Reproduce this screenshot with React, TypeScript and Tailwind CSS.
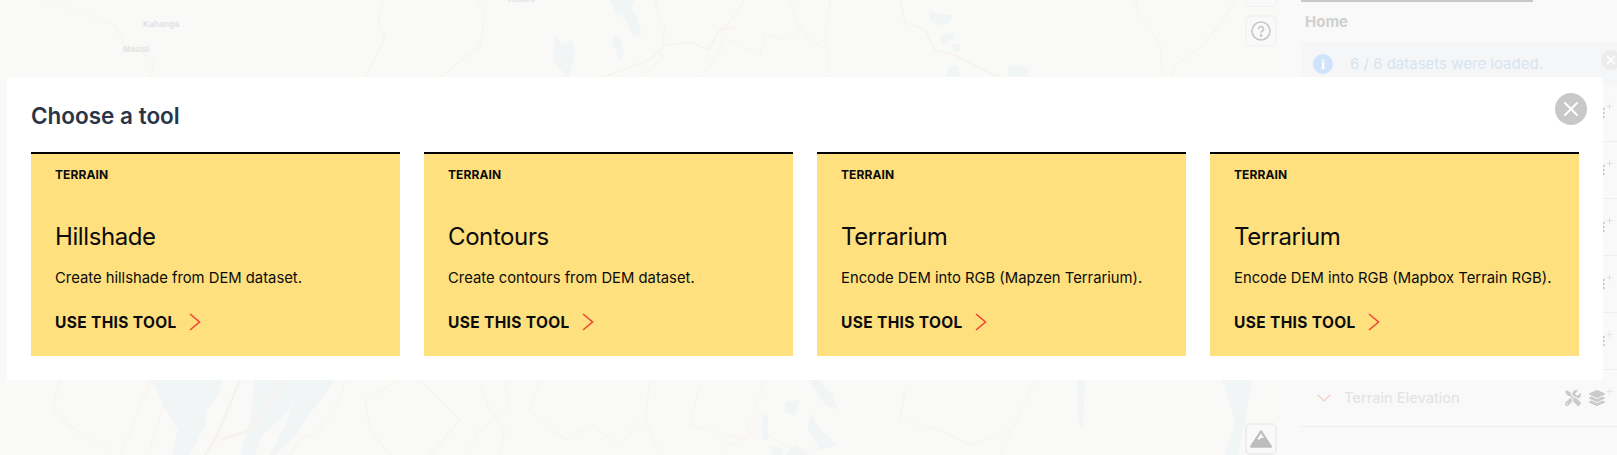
import React from "react";
import { Plus, X } from "lucide-react";
import { FaLayerGroup, FaMountain, FaTools } from "react-icons/fa";

const tools = [
  { title: "Hillshade", text: "Create hillshade from DEM dataset." },
  { title: "Contours", text: "Create contours from DEM dataset." },
  { title: "Terrarium", text: "Encode DEM into RGB (Mapzen Terrarium)." },
  { title: "Terrarium", text: "Encode DEM into RGB (Mapbox Terrain RGB)." },
];

function ToolCard({ title, text }: { title: string; text: string }) {
  return (
    <div className="flex h-[204px] w-[369px] flex-col border-t-2 border-black bg-[#fee07f] pl-6 text-[#0c0c0c]">
      <div className="mt-[13px] h-[16px] text-[12px] font-bold leading-[16px] tracking-[0.1px]">TERRAIN</div>
      <div className="mt-[38px] h-[32px] text-[24px] leading-[32px] tracking-[-0.4px]">{title}</div>
      <div className="mt-[15px] h-[20px] text-[14.8px] leading-[20px]">{text}</div>
      <div className="mt-[25px] flex h-[20px] items-center text-[15.5px] font-bold leading-[20px] tracking-[0.35px]">
        USE THIS TOOL
        <svg className="ml-[12px] -translate-y-px" width="12" height="18" viewBox="0 0 12 18" fill="none" stroke="#f04438" strokeWidth="1.6">
          <path d="M1 1 L10.5 9 L1 17" />
        </svg>
      </div>
    </div>
  );
}

function MapLayer() {
  return (
    <svg className="h-full w-full" viewBox="0 0 1285 455" fill="none">
      <rect width="1285" height="455" fill="#f9f9f7" />
      <g stroke="#faf4eb" strokeWidth="1.2" strokeLinejoin="round">
        <path d="M45 0 L90 15 L115 25 L125 45 L155 60 L150 78" />
        <path d="M383 0 L378 20 L385 38 L365 78" />
        <path d="M478 0 L485 15 L480 45 L440 78" />
        <path d="M655 0 L660 20 L665 28 L660 60 L640 78" />
        <path d="M700 78 L722 48 L722 30 L735 15 L745 0" />
        <path d="M725 38 L760 55 L765 35 L785 40 L800 28 L790 0" />
        <path d="M800 28 L815 45 L825 40 L830 0" />
        <path d="M826 40 L830 78" />
        <path d="M1135 0 L1140 18 L1150 28 L1160 45 L1163 78" />
        <path d="M1235 0 L1220 25 L1200 48 L1175 65 L1170 78" />
        <path d="M60 380 L52 410 L75 430 L110 450" />
        <path d="M150 380 L135 420 L120 455" />
        <path d="M150 380 L165 400 L150 450" />
        <path d="M345 380 L340 400 L320 430 L300 440 L290 455" />
        <path d="M400 380 L365 400 L370 430 L390 455" />
        <path d="M420 380 L440 400 L460 420 L430 455" />
        <path d="M480 385 L490 410 L505 430 L500 455" />
        <path d="M505 380 L510 410 L480 430 L465 455" />
        <path d="M540 380 L530 410 L565 440 L590 425 L620 445 L640 420" />
        <path d="M650 380 L645 420 L660 455" />
        <path d="M700 385 L690 425 L745 440 L765 380" />
        <path d="M720 450 L760 430 L800 455" />
        <path d="M905 390 L900 420 L940 430 L970 445 L1010 430" />
        <path d="M1035 380 L1012 430 L1000 455" />
      </g>
      <g stroke="#f8f2ed" strokeWidth="1.6" strokeLinejoin="round">
        <path d="M900 0 L905 22 L925 30 L935 50 L955 55 L1000 78" />
        <path d="M600 78 L650 60 L665 45 L690 42 L708 50 L720 30 L733 28" />
      </g>
      <g fill="#f2f5f5">
        <path d="M610 0 L635 0 L632 8 L636 16 L641 30 L640 37 L633 36 L628 25 L622 16 L616 14 Z" />
        <path d="M614 36 L621 38 L622 47 L624 49 L622 60 L618 60 L617 50 L612 46 Z" />
        <path d="M929 10 L935 13 L952 15 L950 22 L942 26 L930 20 Z" />
        <path d="M940 35 L952 32 L954 38 L942 46 Z" />
        <path d="M953 44 L960 44 L960 52 L953 52 Z" />
        <path d="M950 66 L958 66 L960 75 L958 78 L945 78 Z" />
        <path d="M1008 66 L1025 66 L1030 72 L1025 78 L1008 78 Z" />
        <path d="M555 33 L562 45 L572 40 L575 55 L568 78 L553 60 Z" />
        <path d="M152 380 L222 380 L218 395 L208 408 L205 425 L190 455 L172 455 L178 430 L168 415 Z" />
        <path d="M255 380 L300 380 L290 410 L262 435 L255 455 L240 455 L250 420 Z" />
        <path d="M300 380 L335 380 L320 400 L295 435 L275 455 L270 455 L288 420 Z" />
        <path d="M785 402 L800 400 L795 415 L785 412 Z" />
        <path d="M808 380 L820 380 L832 395 L838 410 L825 405 Z" />
        <path d="M810 412 L820 430 L838 445 L820 450 L808 430 Z" />
        <path d="M762 415 L768 415 L768 440 L762 440 Z" />
        <path d="M770 445 L785 450 L775 468 Z" />
        <path d="M785 455 L810 455 L795 445 Z" />
        <path d="M1078 380 L1085 380 L1083 430 L1078 420 Z" />
        <path d="M1222 380 L1252 380 L1245 420 L1238 455 L1225 455 L1235 420 Z" />
      </g>
      <path d="M240 380 L215 440 L205 455 M282 380 L250 430 L220 440" stroke="#f8f1ed" strokeWidth="2.5" />
      <g fontFamily="'Liberation Sans',sans-serif" fontWeight="700" fill="#dfe2e6">
        <text x="143" y="27" fontSize="8.6">Kahanga</text>
        <text x="123" y="52" fontSize="8.6">Masisi</text>
        <text x="508" y="2" fontSize="8.6">Kisoro</text>
      </g>
    </svg>
  );
}

function SidebarRow({ tools: showTools, label }: { tools?: boolean; label?: string }) {
  return (
    <div className="relative flex h-[57px] shrink-0 items-center border-b border-[#eeeeee] pl-[16px] text-[#e2e2e2]">
      <svg width="14" height="8" viewBox="0 0 14 8" fill="none" stroke="#f5d3cb" strokeWidth="1.5">
        <path d="M0.5 0.5 L7 7 L13.5 0.5" />
      </svg>
      <span className="ml-[13px] text-[14.7px]">{label}</span>
      <div className="ml-auto mr-[12px] flex items-center gap-[8px] text-[#cacaca]">
        {showTools && <FaTools className="h-[16px] w-[16px]" />}
        <FaLayerGroup className="h-[16px] w-[16px]" />
      </div>
      <Plus className="absolute right-[3px] top-[17px] h-[9px] w-[9px] text-[#dcdcdc]" strokeWidth={2} />
    </div>
  );
}

export default function App() {
  return (
    <div className="relative flex h-[455px] w-[1617px] overflow-hidden bg-[#f9f9f9] font-['Inter',sans-serif]">
      <div className="relative h-full w-[1285px] shrink-0">
        <MapLayer />
        <div className="absolute left-[1245px] top-[-24px] h-[31px] w-[32px] rounded-[5px] border border-[#f0f0ee] bg-[#f9f9f9]" />
        <div className="absolute left-[1245px] top-[15px] flex h-[32px] w-[32px] items-center justify-center rounded-[5px] border-2 border-[#f3f3f1] bg-[#f9f9f9] text-[#c6c6c6]">
          <svg width="20" height="20" viewBox="0 0 20 20" fill="none" stroke="currentColor" strokeWidth="1.6">
            <circle cx="10" cy="10" r="9" />
            <path d="M7.5 8a2.5 2.5 0 1 1 3.6 2.2c-.8.4-1.1.9-1.1 1.6" />
            <circle cx="10" cy="14.5" r=".6" fill="currentColor" />
          </svg>
        </div>
        <div className="absolute left-[1245px] top-[423px] flex h-[32px] w-[32px] items-center justify-center rounded-[5px] border-2 border-[#eeeeee] bg-[#f9f9f9] text-[#bdbdbd]">
          <FaMountain className="h-[20px] w-[22px]" />
        </div>
      </div>
      <aside className="flex w-[332px] flex-col pl-[16px] text-[#d0d0d0]">
        <div className="h-[2px] w-[232px] shrink-0 bg-[#c8c8c8]" />
        <div className="ml-[4px] mt-[10px] h-[20px] text-[15px] font-bold leading-[20px]">Home</div>
        <div className="relative mt-[10px] flex h-[43px] shrink-0 items-start bg-[#f4f6f8] pl-[12px] pt-[12px] text-[#d8e4ef]">
          <span className="flex h-[20px] w-[20px] items-center justify-center rounded-full bg-[#cfe4fb] font-['Liberation_Serif',serif] text-[14px] font-bold text-white">i</span>
          <span className="ml-[17px] text-[15px] leading-[20px]">6 / 6 datasets were loaded.</span>
          <span className="absolute left-[300px] top-[8px] flex h-[20px] w-[20px] items-center justify-center rounded-full bg-[#ececec] text-white">
            <X className="h-[14px] w-[14px]" strokeWidth={3} />
          </span>
        </div>
        <SidebarRow />
        <SidebarRow />
        <SidebarRow />
        <SidebarRow />
        <SidebarRow />
        <SidebarRow tools label="Terrain Elevation" />
      </aside>
      <div className="absolute left-[7px] top-[77px] h-[303px] w-[1596px] bg-white px-6">
        <h2 className="mt-[24px] h-[30px] text-[22.5px] font-semibold leading-[30px] text-[#2a3547]">Choose a tool</h2>
        <div className="mt-[21px] flex gap-6">
          {tools.map((t, i) => <ToolCard key={i} {...t} />)}
        </div>
        <div className="absolute right-[16px] top-[16px] flex h-[32px] w-[32px] items-center justify-center rounded-full bg-[#c8c8c8] text-white">
          <X className="h-[24px] w-[24px]" strokeWidth={2} />
        </div>
      </div>
    </div>
  );
}
